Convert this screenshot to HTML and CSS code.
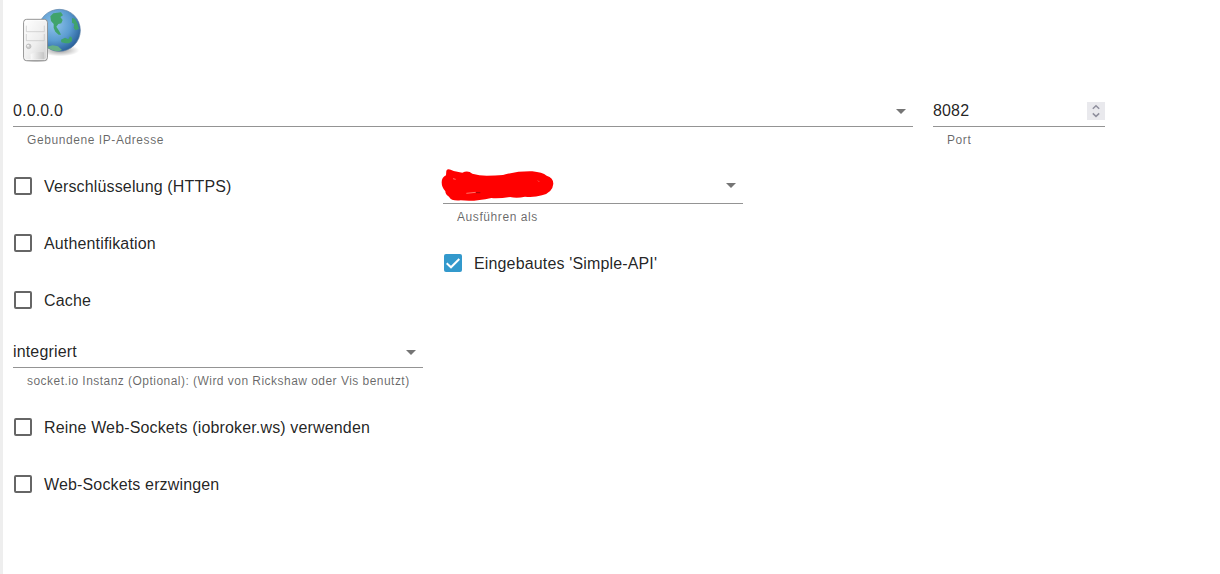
FILE: index.html
```
<!DOCTYPE html>
<html lang="de">
<head>
<meta charset="utf-8">
<title>Web-Server</title>
<link rel="stylesheet" href="styles.css">
</head>
<body>
<main class="page">
  <header class="logo">
    <svg width="70" height="65" viewBox="60 15 210 195">
      <defs>
        <radialGradient id="sea" cx=".38" cy=".35" r=".72"><stop offset="0" stop-color="#91c4ea"/><stop offset=".55" stop-color="#5b9cd1"/><stop offset="1" stop-color="#245a94"/></radialGradient>
        <linearGradient id="case" x1="0" y1="0" x2="1" y2="1"><stop offset="0" stop-color="#fff"/><stop offset=".55" stop-color="#eee"/><stop offset="1" stop-color="#ccc"/></linearGradient>
        <linearGradient id="foot"><stop offset="0" stop-color="#fafafa"/><stop offset="1" stop-color="#c5c5c5"/></linearGradient>
        <radialGradient id="shade"><stop offset="0" stop-color="#000" stop-opacity=".4"/><stop offset="1" stop-color="#000" stop-opacity="0"/></radialGradient>
        <clipPath id="ball"><circle cx="178" cy="91" r="63"/></clipPath>
      </defs>
      <ellipse cx="180" cy="151" rx="58" ry="18" fill="url(#shade)"/>
      <circle cx="178" cy="91" r="63" fill="url(#sea)" stroke="#5b7fa5" stroke-width="2"/>
      <g clip-path="url(#ball)" fill="#40a36c">
        <path d="M151 49 160 40 183 37 189 46 181 51 188 60 184 70 175 72 169 80 174 88 179 96 183 104 176 104 166 95 161 84 161 72 153 63Z"/>
        <path d="M216 54 225 56 232 70 237 87 226 91 221 83 223 72 216 68Z"/>
        <path d="M183 119 195 113 205 118 210 109 216 113 216 123 207 130 196 130 184 127Z"/>
        <path d="M138 141 158 136 174 139 186 150 170 156 150 152Z" fill="#65ae87"/>
      </g>
      <ellipse cx="108" cy="182" rx="38" ry="5" fill="url(#shade)"/>
      <rect x="71" y="58" width="71" height="124" rx="9" fill="url(#case)" stroke="#8a8a8a" stroke-width="3"/>
      <rect x="74" y="61" width="65" height="118" rx="6" fill="none" stroke="#fff" stroke-width="2"/>
      <path d="M92 162Q108 154 132 157V178H92Z" fill="url(#foot)"/>
      <path d="M79 77V95H133V77M79 102V122H133V102" fill="none" stroke="#c4c4c4" stroke-width="2"/>
      <circle cx="86" cy="139" r="7" fill="#ccc" stroke="#b0b0b0" stroke-width="2"/>
      <circle cx="84" cy="137" r="3" fill="#f5f5f5"/>
    </svg>
  </header>

  <section class="row network">
    <div class="field">
      <div class="control ip"><span>0.0.0.0</span><svg class="arrow" width="24" height="24" viewBox="0 0 24 24"><path d="M7 10l5 5 5-5z"/></svg></div>
      <div class="helper">Gebundene IP-Adresse</div>
    </div>
    <div class="field">
      <div class="control number"><span>8082</span><svg class="spinner" width="18" height="18" viewBox="0 0 18 18"><path d="M5.8 6.8 9 3.8l3.2 3M5.8 11.4l3.2 3 3.2-3"/></svg></div>
      <div class="helper">Port</div>
    </div>
  </section>

  <section class="row options">
    <div class="column">
      <label class="check"><span class="box"></span><span class="label">Verschlüsselung (HTTPS)</span></label>
      <label class="check"><span class="box"></span><span class="label">Authentifikation</span></label>
      <label class="check"><span class="box"></span><span class="label">Cache</span></label>
      <div class="field socket">
        <div class="control"><span>integriert</span><svg class="arrow" width="24" height="24" viewBox="0 0 24 24"><path d="M7 10l5 5 5-5z"/></svg></div>
        <div class="helper">socket.io Instanz (Optional): (Wird von Rickshaw oder Vis benutzt)</div>
      </div>
      <label class="check"><span class="box"></span><span class="label">Reine Web-Sockets (iobroker.ws) verwenden</span></label>
      <label class="check"><span class="box"></span><span class="label">Web-Sockets erzwingen</span></label>
    </div>
    <div class="column">
      <div class="field user">
        <div class="control">
          <svg class="scribble" width="114" height="36" viewBox="0 0 342 108">
            <path fill="#f00" d="M19 14Q23 7 32 11L41 15Q57 19 67 20Q84 12 97 23Q118 29 140 29Q166 29 189 27Q228 15 277 16Q307 19 320 29Q340 35 340 53Q338 79 306 88Q281 95 255 92Q231 98 210 93Q177 98 154 96Q102 108 62 103Q34 106 27 92Q16 86 16 76Q5 64 5 49Q5 34 18 28Z"/>
            <path fill="none" stroke="#ffb0a0" stroke-width="2" d="M79 82 107 79M39 38 47 40M294 44 297 47"/>
            <path stroke="#611" stroke-width="2" d="M108 80H121"/>
          </svg>
          <svg class="arrow" width="24" height="24" viewBox="0 0 24 24"><path d="M7 10l5 5 5-5z"/></svg>
        </div>
        <div class="helper">Ausführen als</div>
      </div>
      <label class="check"><span class="box checked"><svg width="18" height="18" viewBox="0 0 18 18"><path d="M2.7 9.2 7 13.3 15.3 5"/></svg></span><span class="label">Eingebautes 'Simple-API'</span></label>
    </div>
  </section>
</main>
</body>
</html>
```
FILE: styles.css
```
* { box-sizing: border-box; }
body {
  margin: 0;
  background: #fff;
  color: rgba(0, 0, 0, .87);
  font: 16px/20px "Liberation Sans", Arial, sans-serif;
}
.page {
  min-height: 574px;
  padding-left: 10px;
  border-left: 3px solid #eee;
}
.logo { height: 95px; padding: 5px 0 0 7px; }
.logo svg { display: block; }
.row { display: grid; column-gap: 20px; }
.network { grid-template-columns: 900px 172px; height: 63px; }
.options { grid-template-columns: 410px 300px; }
.column { display: flex; flex-direction: column; }
.control {
  display: flex;
  align-items: center;
  justify-content: space-between;
  height: 32px;
  border-bottom: 1px solid #949494;
  letter-spacing: .15px;
}
.arrow { fill: #757575; }
.spinner {
  background: #e9e9ed;
  fill: none;
  stroke: #8f8f9d;
  stroke-width: 1.5;
}
.helper {
  height: 20px;
  margin: 3px 14px 0;
  color: rgba(0, 0, 0, .6);
  font-size: 12px;
  letter-spacing: .58px;
  white-space: nowrap;
}
.socket { margin: 7px 0 8px; }
.socket .helper { letter-spacing: .465px; }
.user { margin: 14px 0 8px; }
.user .control { align-items: flex-start; }
.user .arrow { margin-top: 1px; }
.scribble { margin: -6px 0 0 -3px; }
.check {
  display: flex;
  align-items: center;
  height: 56px;
  margin-bottom: 1px;
  padding-left: 1px;
}
.label {
  padding-top: 2px;
  letter-spacing: .15px;
}
.box {
  width: 18px;
  height: 18px;
  margin-right: 12px;
  border: 2px solid #666;
  border-radius: 2px;
}
.checked { border: 0; background: #3399cc; }
.checked svg {
  display: block;
  fill: none;
  stroke: #fff;
  stroke-width: 2;
}
```
